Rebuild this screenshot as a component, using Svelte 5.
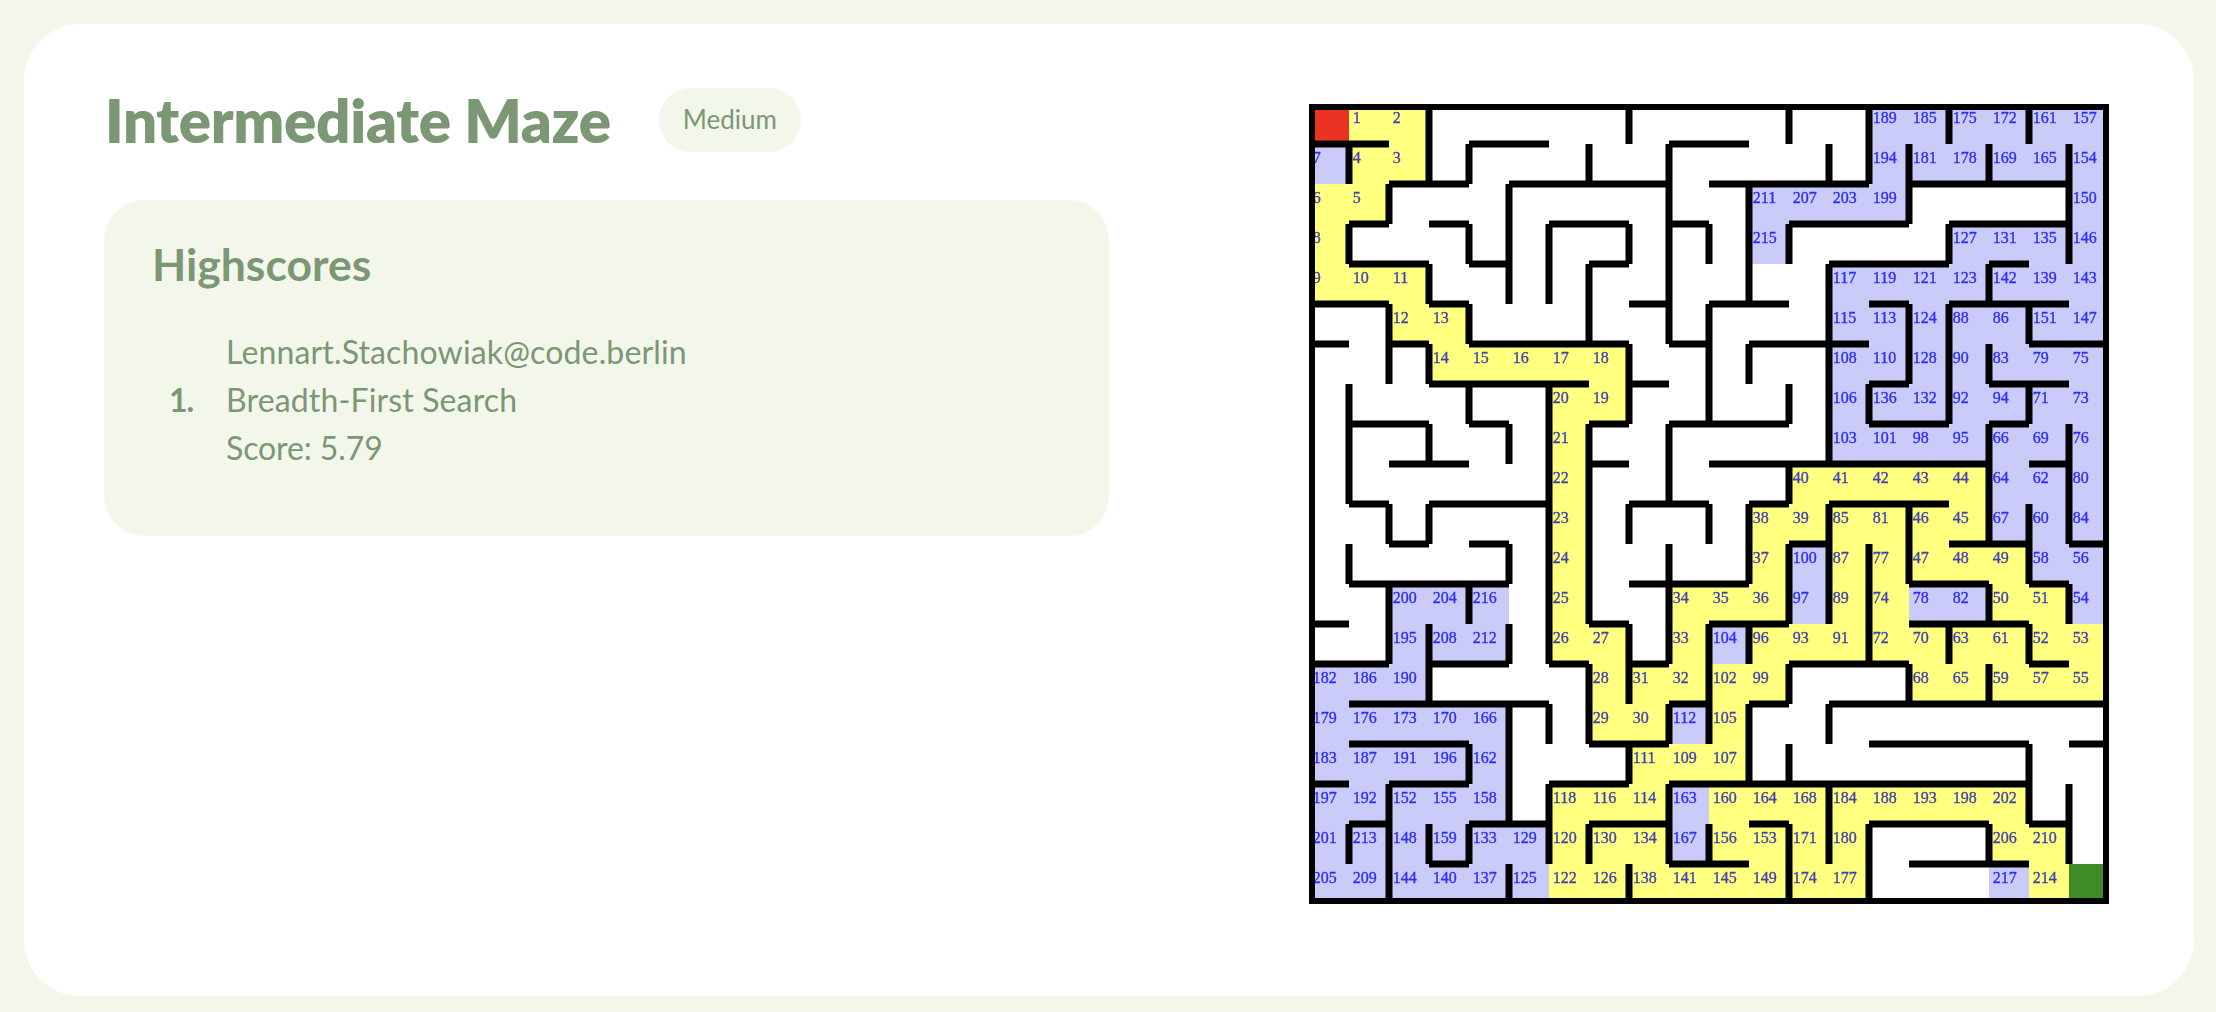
<script>
  const CELL = 40;
  const SIZE = 20 * CELL;

  const scores = [
    { user: 'Lennart.Stachowiak@code.berlin', algorithm: 'Breadth-First Search', score: '5.79' },
  ];

  // One entry per row: [first column, cells]. "*" marks a cell on the solution path.
  const rows = [
    [[0, 'S 1* 2*'], [14, '189 185 175 172 161 157']],
    [[0, '7 4* 3*'], [14, '194 181 178 169 165 154']],
    [[0, '6* 5*'], [11, '211 207 203 199'], [19, '150']],
    [[0, '8*'], [11, '215'], [16, '127 131 135 146']],
    [[0, '9* 10* 11*'], [13, '117 119 121 123 142 139 143']],
    [[2, '12* 13*'], [13, '115 113 124 88 86 151 147']],
    [[3, '14* 15* 16* 17* 18*'], [13, '108 110 128 90 83 79 75']],
    [[6, '20* 19*'], [13, '106 136 132 92 94 71 73']],
    [[6, '21*'], [13, '103 101 98 95 66 69 76']],
    [[6, '22*'], [12, '40* 41* 42* 43* 44* 64 62 80']],
    [[6, '23*'], [11, '38* 39* 85* 81* 46* 45* 67 60 84']],
    [[6, '24*'], [11, '37* 100 87* 77* 47* 48* 49* 58 56']],
    [[2, '200 204 216'], [6, '25*'], [9, '34* 35* 36* 97 89* 74* 78 82 50* 51* 54']],
    [[2, '195 208 212'], [6, '26* 27*'], [9, '33* 104 96* 93* 91* 72* 70* 63* 61* 52* 53*']],
    [[0, '182 186 190'], [7, '28* 31* 32* 102* 99*'], [15, '68* 65* 59* 57* 55*']],
    [[0, '179 176 173 170 166'], [7, '29* 30* 112 105*']],
    [[0, '183 187 191 196 162'], [8, '111* 109* 107*']],
    [[0, '197 192 152 155 158'], [6, '118* 116* 114* 163 160* 164* 168* 184* 188* 193* 198* 202*']],
    [[0, '201 213 148 159 133 129 120* 130* 134* 167 156* 153* 171* 180*'], [17, '206* 210*']],
    [[0, '205 209 144 140 137 125 122* 126* 138* 141* 145* 149* 174* 177*'], [17, '217 214* E']],
  ];

  const cells = rows.flatMap((runs, row) =>
    runs.flatMap(([start, text]) =>
      text.split(' ').map((token, i) => ({
        x: (start + i) * CELL,
        y: row * CELL,
        label: /\d/.test(token) ? token.replace('*', '') : '',
        kind: token === 'S' ? 'start' : token === 'E' ? 'end' : token.endsWith('*') ? 'path' : 'visited',
      }))
    )
  );

  // Wall spans along each inner grid line, from line 1 to line 19.
  const horizontal = [
    '0-2 4-6 9-11',
    '2-4 5-9 10-14 15-19',
    '1-2 3-4 6-8 9-10 12-15 16-19',
    '1-3 4-5 7-8 13-16 17-18',
    '0-2 3-4 8-9 10-12 14-15 16-19',
    '0-1 2-3 4-8 9-10 11-14 18-20',
    '3-7 8-9 14-15 17-19',
    '1-3 4-5 7-8 9-12 14-16 17-18',
    '2-4 7-8 10-17 18-19',
    '1-2 3-6 8-10 11-12 13-16',
    '2-3 4-5 12-13 16-18 19-20',
    '1-5 8-11 15-17 18-19',
    '0-1 7-8 10-12 15-18',
    '0-2 3-5 6-7 8-9 12-15 18-19',
    '1-6 9-10 11-12 13-20',
    '1-4 7-9 14-18 19-20',
    '0-1 2-4 6-8 9-18',
    '1-2 4-6 7-9 11-12 14-17 18-19',
    '3-4 9-11 15-18',
  ];
  const vertical = [
    '1-2 3-4 7-10 11-12 18-19',
    '2-3 5-7 10-11 12-14 17-20',
    '0-2 4-5 6-7 8-9 10-11 13-15 18-19',
    '1-2 3-4 5-6 7-8 12-13 16-17 18-19',
    '2-5 8-9 11-12 13-14 15-18 19-20',
    '3-5 7-14 15-16 17-19',
    '1-2 4-6 8-13 14-16 18-19',
    '0-1 3-4 6-8 10-11 13-15 16-17 19-20',
    '1-6 8-10 11-14 15-16 17-19',
    '3-4 5-8 10-11 13-16 18-19',
    '2-5 6-7 10-12 13-14 15-17',
    '0-1 3-4 7-8 9-10 11-13 14-15 16-17 18-20',
    '1-2 4-9 10-13 15-16 17-19',
    '0-2 7-8 11-14 18-20',
    '1-3 5-7 10-12 14-15',
    '0-1 3-4 5-8 13-14',
    '1-2 4-5 6-7 8-11 12-13 14-15 18-19',
    '0-1 5-6 7-8 10-12 13-14 16-18',
    '1-4 8-11 12-13 17-19',
  ];

  const spans = (lines, draw) =>
    lines
      .flatMap((line, i) =>
        line.split(' ').map((span) => {
          const [from, to] = span.split('-').map((n) => n * CELL);
          return draw((i + 1) * CELL, from, to);
        })
      )
      .join('');

  const walls =
    spans(horizontal, (at, from, to) => `M${from} ${at}H${to}`) +
    spans(vertical, (at, from, to) => `M${at} ${from}V${to}`);
</script>

<main class="card">
  <section class="details">
    <header>
      <h1>Intermediate Maze</h1>
      <span class="badge">Medium</span>
    </header>
    <div class="highscores">
      <h2>Highscores</h2>
      <ol>
        {#each scores as entry, i}
          <li>
            <b>{i + 1}.</b>
            <div>
              <p>{entry.user}</p>
              <p>{entry.algorithm}</p>
              <p class="score">Score: {entry.score}</p>
            </div>
          </li>
        {/each}
      </ol>
    </div>
  </section>

  <svg class="maze" viewBox="0 0 {SIZE} {SIZE}" width={SIZE} height={SIZE}>
    {#each cells as cell}
      <rect class={cell.kind} x={cell.x} y={cell.y} width={CELL} height={CELL} />
    {/each}
    <g class="soft">
      {#each cells as cell}
        {#if cell.label}
          <text class:on-path={cell.kind === 'path'} x={cell.x + 3.8} y={cell.y + 19.2}>{cell.label}</text>
        {/if}
      {/each}
      <path class="wall" d={walls} />
    </g>
    <rect class="frame" x="3" y="3" width={SIZE - 6} height={SIZE - 6} />
  </svg>
</main>

<style>
  :global(body) {
    background: #f3f6eb;
  }
  .card {
    box-sizing: border-box;
    display: flex;
    justify-content: space-between;
    height: 972px;
    margin: 24px 22px 16px 24px;
    padding: 64px 85px 64px 80px;
    border-radius: 56px;
    background: #fff;
    color: #7b9774;
    font-family: Lato, sans-serif;
  }
  .details {
    width: 1005px;
  }
  header {
    display: flex;
    align-items: center;
    gap: 48px;
    height: 64px;
  }
  h1 {
    margin: 0 0 0 1px;
    font-size: 60px;
    font-weight: 800;
    letter-spacing: -0.32px;
    line-height: 64px;
    white-space: nowrap;
  }
  .badge {
    box-sizing: border-box;
    height: 64px;
    padding: 0 24px;
    border-radius: 32px;
    background: #f3f6eb;
    font-size: 26px;
    line-height: 63px;
  }
  .highscores {
    box-sizing: border-box;
    height: 336px;
    margin-top: 48px;
    padding: 38px 48px;
    border-radius: 40px;
    background: #f3f6eb;
  }
  h2 {
    margin: 0;
    font-size: 44.5px;
    font-weight: 700;
    line-height: 52px;
  }
  ol {
    margin: 38px 0 0;
    padding: 0;
    list-style: none;
    font-size: 32px;
    line-height: 48px;
  }
  li {
    display: flex;
    align-items: center;
    padding-left: 17px;
  }
  b {
    width: 57px;
    letter-spacing: -1px;
  }
  p {
    margin: 0;
    letter-spacing: 0.15px;
  }
  .score {
    letter-spacing: -0.1px;
  }
  .maze {
    flex: none;
    margin-top: 16px;
  }
  .start {
    fill: #ea3323;
  }
  .end {
    fill: #3f8c27;
  }
  .path {
    fill: #ffff80;
  }
  .visited {
    fill: #cbcbfa;
  }
  .soft {
    filter: blur(0.5px);
  }
  text {
    fill: #2e2ef5;
    stroke: #2e2ef5;
    stroke-width: 0.35;
    font: 16px 'Liberation Serif', serif;
  }
  .on-path {
    fill: #4343b0;
    stroke: #4343b0;
  }
  .wall {
    fill: none;
    stroke: #000;
    stroke-width: 7;
  }
  .frame {
    fill: none;
    stroke: #000;
    stroke-width: 6;
  }
</style>
